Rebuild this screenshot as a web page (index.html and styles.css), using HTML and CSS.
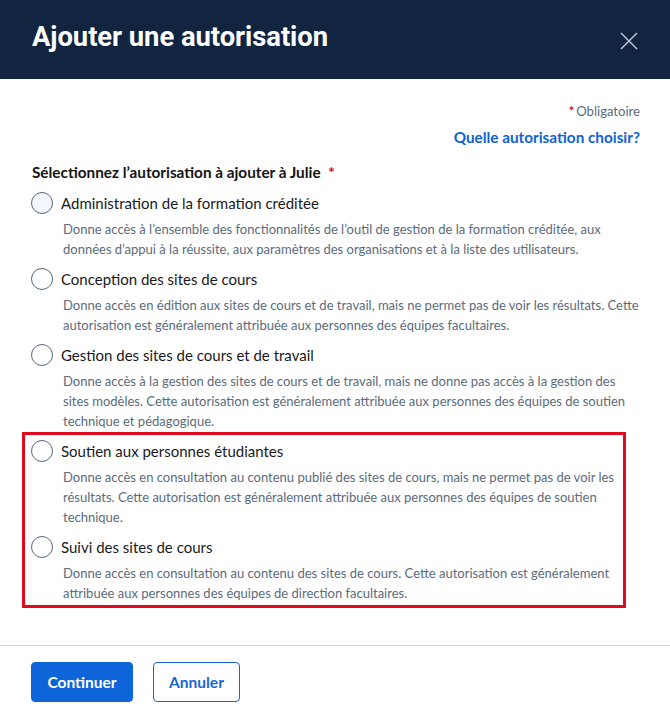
FILE: index.html
```html
<!DOCTYPE html>
<html lang="fr">
<head>
<meta charset="utf-8">
<title>Ajouter une autorisation</title>
<link rel="stylesheet" href="styles.css">
</head>
<body>
<div class="dialog">
  <header class="dialog-header">
    <h1 class="dialog-title">Ajouter une autorisation</h1>
    <button class="close-btn" aria-label="Fermer">
      <svg width="18" height="18" viewBox="0 0 18 18" aria-hidden="true">
        <path d="M1 1 L17 17 M17 1 L1 17" stroke="#c3ccd8" stroke-width="1.4" fill="none"/>
      </svg>
    </button>
  </header>

  <main class="dialog-body">
    <div class="required-note"><span class="star">*</span>Obligatoire</div>
    <div class="help-row"><a class="help-link" href="#">Quelle autorisation choisir?</a></div>

    <fieldset class="options">
      <legend class="legend">Sélectionnez l’autorisation à ajouter à Julie <span class="star legend-star">*</span></legend>

      <label class="option">
        <span class="option-head"><span class="radio first"></span><span class="option-label">Administration de la formation créditée</span></span>
        <span class="option-desc">Donne accès à l’ensemble des fonctionnalités de l’outil de gestion de la formation créditée, aux données d’appui à la réussite, aux paramètres des organisations et à la liste des utilisateurs.</span>
      </label>

      <label class="option">
        <span class="option-head"><span class="radio"></span><span class="option-label">Conception des sites de cours</span></span>
        <span class="option-desc">Donne accès en édition aux sites de cours et de travail, mais ne permet pas de voir les résultats. Cette autorisation est généralement attribuée aux personnes des équipes facultaires.</span>
      </label>

      <label class="option">
        <span class="option-head"><span class="radio"></span><span class="option-label">Gestion des sites de cours et de travail</span></span>
        <span class="option-desc">Donne accès à la gestion des sites de cours et de travail, mais ne donne pas accès à la gestion des sites modèles. Cette autorisation est généralement attribuée aux personnes des équipes de soutien technique et pédagogique.</span>
      </label>

      <div class="highlight">
        <label class="option">
          <span class="option-head"><span class="radio"></span><span class="option-label">Soutien aux personnes étudiantes</span></span>
          <span class="option-desc">Donne accès en consultation au contenu publié des sites de cours, mais ne permet pas de voir les résultats. Cette autorisation est généralement attribuée aux personnes des équipes de soutien technique.</span>
        </label>

        <label class="option">
          <span class="option-head"><span class="radio"></span><span class="option-label">Suivi des sites de cours</span></span>
          <span class="option-desc">Donne accès en consultation au contenu des sites de cours. Cette autorisation est généralement attribuée aux personnes des équipes de direction facultaires.</span>
        </label>
      </div>
    </fieldset>
  </main>

  <footer class="dialog-footer">
    <button class="btn btn-primary">Continuer</button>
    <button class="btn btn-secondary">Annuler</button>
  </footer>
</div>
</body>
</html>
```
FILE: styles.css
```css
* { box-sizing: border-box; }

html, body {
  margin: 0;
  padding: 0;
  background: #ffffff;
}

body {
  font-family: "Lato", "Liberation Sans", sans-serif;
  color: #1a1a1a;
}

.dialog {
  width: 670px;
  min-height: 724px;
  display: flex;
  flex-direction: column;
}

.dialog-header {
  height: 79px;
  background: #112540;
  display: flex;
  align-items: center;
  justify-content: space-between;
  padding: 0 32px 0 32px;
}

.dialog-title {
  margin: 0;
  font-family: "Roboto", "Liberation Sans", sans-serif;
  font-weight: 700;
  font-size: 27.4px;
  color: #ffffff;
  letter-spacing: -0.05px;
  line-height: 1;
  padding-bottom: 4px;
}

.close-btn {
  width: 18px;
  height: 18px;
  padding: 0;
  border: 0;
  background: transparent;
  display: flex;
  margin-top: 2px;
  cursor: pointer;
}

.dialog-body {
  padding: 22px 30px 37px 31px;
}

.required-note {
  text-align: right;
  font-size: 13.1px;
  line-height: 20px;
  color: #5b6b7c;
}

.star {
  color: #e1001b;
  font-weight: 700;
  margin-right: 2px;
}

.help-row {
  text-align: right;
  margin-top: 5px;
  line-height: 22px;
}

.help-link {
  color: #0d63d6;
  font-weight: 700;
  font-size: 15.3px;
  text-decoration: none;
}

.options {
  border: 0;
  margin: 13px 0 0 0;
  padding: 0;
  min-width: 0;
}

.legend {
  padding: 0 0 0 1px;
  font-weight: 700;
  font-size: 15.3px;
  line-height: 22px;
  color: #141414;
}

.legend-star {
  margin-left: 4px;
}

.option {
  display: block;
  cursor: pointer;
}

.options > .option:first-of-type {
  margin-top: 8px;
}

.option + .option {
  margin-top: 8px;
}

.option-head {
  display: flex;
  align-items: center;
  gap: 8px;
  height: 24px;
}

.radio {
  width: 22px;
  height: 22px;
  border-radius: 50%;
  border: 1.5px solid #56667a;
  background: #ffffff;
  flex: none;
}

.radio.first {
  background: #f3f7fd;
}

.option-label {
  font-size: 15px;
  line-height: 24px;
  color: #1a1a1a;
}

.option-desc {
  display: block;
  margin-top: 4px;
  margin-right: -2px;
  padding-left: 32px;
  font-size: 13px;
  line-height: 20px;
  color: #5b6b7c;
}

.highlight {
  margin: 1px 14px 0 -9px;
  border: 3px solid #df0a1e;
  padding: 4px 0 2px 6px;
}

.highlight .option-desc {
  margin-right: 0;
}

.dialog-footer {
  border-top: 1px solid #d3d9e1;
  padding: 16px 31px 21px 31px;
  display: flex;
  gap: 20px;
}

.btn {
  height: 40px;
  border-radius: 4px;
  font-family: "Lato", "Liberation Sans", sans-serif;
  font-weight: 700;
  font-size: 15.5px;
  cursor: pointer;
}

.btn-primary {
  width: 102px;
  background: #0d65d9;
  border: 1px solid #0d65d9;
  color: #ffffff;
}

.btn-secondary {
  width: 87px;
  background: #ffffff;
  border: 1px solid #1766d4;
  color: #1766d4;
}
```
